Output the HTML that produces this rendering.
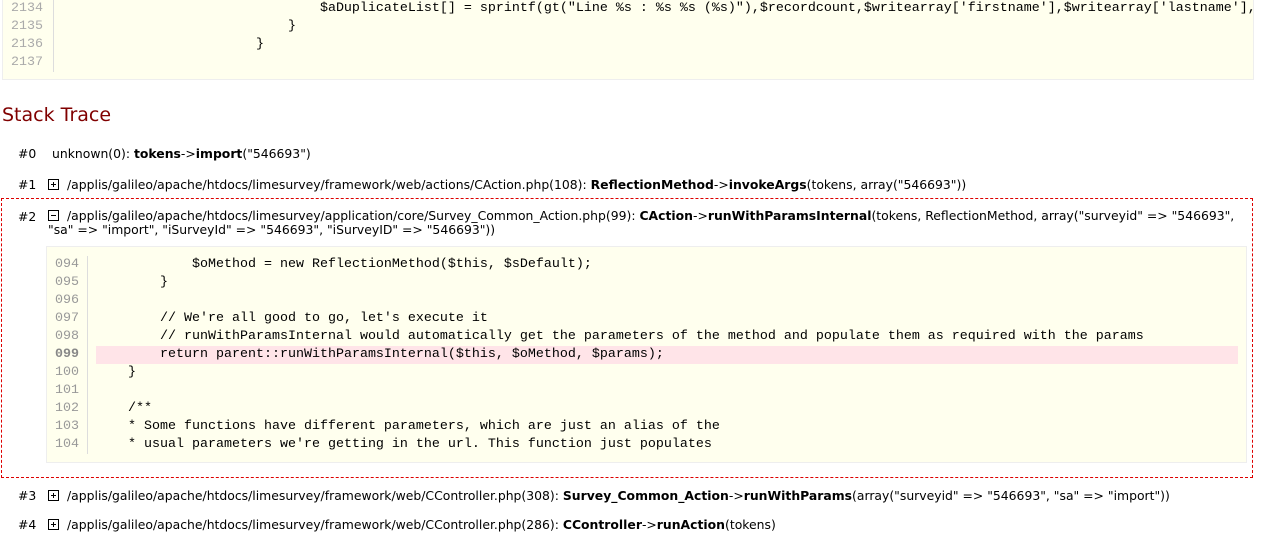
<!DOCTYPE html>
<html><head><meta charset="utf-8"><style>
body{margin:0;background:#fff;font-family:"DejaVu Sans",Verdana,sans-serif;font-size:12.4px;color:#000;width:1265px;height:543px;overflow:hidden;position:relative}
.code{position:absolute;background:#ffffee;border:1px solid #eee;overflow:hidden;font-family:"Liberation Mono",monospace;font-size:13.33px;line-height:18px}
.ln{position:absolute;left:0;top:0;color:#aaa;border-right:1px solid #ddd}
.ln div,.src div{height:18px;white-space:pre}
.src{position:absolute;top:0;white-space:pre}
.t{position:absolute;white-space:nowrap}
.n{position:absolute;left:18px}
.box{display:inline-block;width:9px;height:9px;border:1px solid #000;position:relative;top:1px;margin-right:8px;font-size:0}
.box:before{content:"";position:absolute;left:2px;top:4px;width:5px;height:1px;background:#000}
.plus:after{content:"";position:absolute;left:4px;top:2px;width:1px;height:5px;background:#000}
h2{position:absolute;left:2px;top:104px;margin:0;font-weight:normal;font-size:19px;color:#800000}
.hl{background:#ffe4e8}
</style></head><body>
<div class="code" style="left:2px;top:-1px;width:1250px;height:79px">
 <div class="ln" style="left:8px;top:0;width:42px;height:72px"><div>2134</div><div>2135</div><div>2136</div><div>2137</div></div>
 <div class="src" style="left:61px"><div>                                $aDuplicateList[] = sprintf(gt("Line %s : %s %s (%s)"),$recordcount,$writearray['firstname'],$writearray['lastname'],$writearray['email']);</div><div>                            }</div><div>                        }</div><div> </div></div>
</div>
<h2>Stack Trace</h2>
<div class="t" style="left:0;top:146px"><span class="n">#0</span><span style="position:absolute;left:52px">unknown(0): <b>tokens</b>-&gt;<b>import</b>("546693")</span></div>
<div class="t" style="left:0;top:177px"><span class="n">#1</span><span style="position:absolute;left:48px"><span class="box plus"></span>/applis/galileo/apache/htdocs/limesurvey/framework/web/actions/CAction.php(108): <b>ReflectionMethod</b>-&gt;<b>invokeArgs</b>(tokens, array("546693"))</span></div>
<div style="position:absolute;left:1px;top:198px;width:1250px;height:278px;border:1px dashed #d00"></div>
<div class="t" style="left:0;top:209px"><span class="n">#2</span><span style="position:absolute;left:48px;line-height:14px"><span class="box"></span>/applis/galileo/apache/htdocs/limesurvey/application/core/Survey_Common_Action.php(99): <b>CAction</b>-&gt;<b>runWithParamsInternal</b>(tokens, ReflectionMethod, array("surveyid" =&gt; "546693",<br>"sa" =&gt; "import", "iSurveyId" =&gt; "546693", "iSurveyID" =&gt; "546693"))</span></div>
<div class="code" style="left:46px;top:246px;width:1199px;height:215px">
 <div class="ln" style="left:8px;top:9px;width:32px;height:198px;color:#999"><div>094</div><div>095</div><div>096</div><div>097</div><div>098</div><div style="color:#888;font-weight:bold">099</div><div>100</div><div>101</div><div>102</div><div>103</div><div>104</div></div>
 <div class="src" style="left:49px;top:9px;width:1142px"><div>            $oMethod = new ReflectionMethod($this, $sDefault);</div><div>        }</div><div> </div><div>        // We're all good to go, let's execute it</div><div>        // runWithParamsInternal would automatically get the parameters of the method and populate them as required with the params</div><div class="hl">        return parent::runWithParamsInternal($this, $oMethod, $params);</div><div>    }</div><div> </div><div>    /**</div><div>    * Some functions have different parameters, which are just an alias of the</div><div>    * usual parameters we're getting in the url. This function just populates</div></div>
</div>
<div class="t" style="left:0;top:488px"><span class="n">#3</span><span style="position:absolute;left:48px"><span class="box plus"></span>/applis/galileo/apache/htdocs/limesurvey/framework/web/CController.php(308): <b>Survey_Common_Action</b>-&gt;<b>runWithParams</b>(array("surveyid" =&gt; "546693", "sa" =&gt; "import"))</span></div>
<div class="t" style="left:0;top:517px"><span class="n">#4</span><span style="position:absolute;left:48px"><span class="box plus"></span>/applis/galileo/apache/htdocs/limesurvey/framework/web/CController.php(286): <b>CController</b>-&gt;<b>runAction</b>(tokens)</span></div>
</body></html>
